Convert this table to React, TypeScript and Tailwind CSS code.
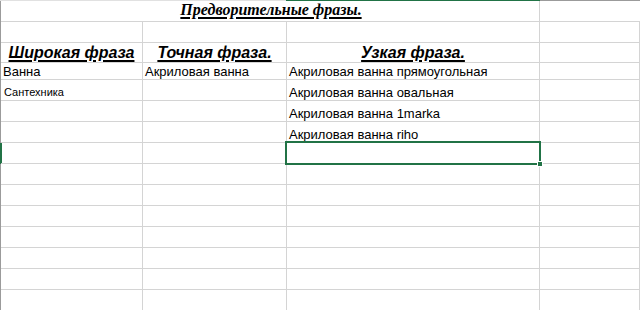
import React from "react";

type Cell = {
  text?: string;
  kind?: "head" | "data" | "small";
};

const sans = { fontFamily: '"Liberation Sans", Arial, sans-serif' };
const serif = { fontFamily: '"Liberation Serif", "Times New Roman", serif' };

const rowHeights = [21, 21, 20, 17, 21, 21, 21, 21, 21, 21, 21, 21, 21, 21, 21];

const body: Cell[][] = [
  [{}, {}, {}, {}],
  [
    { text: "Широкая фраза", kind: "head" },
    { text: "Точная фраза.", kind: "head" },
    { text: "Узкая фраза.", kind: "head" },
    {},
  ],
  [
    { text: "Ванна", kind: "data" },
    { text: "Акриловая ванна", kind: "data" },
    { text: "Акриловая ванна прямоугольная", kind: "data" },
    {},
  ],
  [
    { text: "Сантехника", kind: "small" },
    {},
    { text: "Акриловая ванна овальная", kind: "data" },
    {},
  ],
  [{}, {}, { text: "Акриловая ванна 1marka", kind: "data" }, {}],
  [{}, {}, { text: "Акриловая ванна riho", kind: "data" }, {}],
];

const colWidths = ["w-[142px]", "w-[144px]", "w-[253px]", "flex-1"];

function CellView({ cell, col, selected }: { cell: Cell; col: number; selected: boolean }) {
  const base = `${colWidths[col]} relative h-full border-r border-b border-[#d4d4d4] flex items-end overflow-visible whitespace-nowrap`;
  let content: React.ReactNode = null;
  if (cell.kind === "head") {
    content = (
      <div
        className="w-full text-center text-[16px] leading-none font-bold italic underline decoration-2 underline-offset-[2px] text-black pb-px"
        style={sans}
      >
        {cell.text}
      </div>
    );
  } else if (cell.kind === "data") {
    content = (
      <div className="pl-[2px] text-[13px] leading-none text-black pb-px" style={sans}>
        {cell.text}
      </div>
    );
  } else if (cell.kind === "small") {
    content = (
      <div className="pl-[3px] text-[11px] leading-none text-black pb-[2px]" style={sans}>
        {cell.text}
      </div>
    );
  }
  return (
    <div className={base}>
      {content}
      {selected && (
        <div className="absolute -left-[2px] -top-[2px] -right-[2px] -bottom-[2px] border-2 border-[#217346] z-10">
          <div className="absolute -right-[4px] -bottom-[4px] w-[6px] h-[6px] bg-[#217346] border border-white" />
        </div>
      )}
    </div>
  );
}

export default function App() {
  const extraRows = rowHeights.length - 1 - body.length;
  const rows: Cell[][] = [...body, ...Array.from({ length: extraRows }, () => [{}, {}, {}, {}])];
  const selectedRow = 6;

  return (
    <div className="w-[640px] h-[310px] overflow-hidden bg-white flex flex-col">
      {/* column header bottom edge, active column highlighted */}
      <div className="flex h-px shrink-0">
        <div className="w-[286px] bg-[#e1e1e1]" />
        <div className="w-[254px] bg-[#217346]" />
        <div className="flex-1 bg-[#9b9b9b]" />
      </div>
      <div className="flex flex-1">
        {/* row header right edge, active row highlighted */}
        <div className="w-px shrink-0 flex flex-col">
          {rowHeights.map((h, i) => (
            <div
              key={i}
              className={i === selectedRow + 1 ? "bg-[#217346] w-[2px]" : "bg-[#9b9b9b] w-px"}
              style={{ height: h }}
            />
          ))}
        </div>
        <div className="flex-1 flex flex-col">
          {/* merged title across the first three columns */}
          <div className="flex shrink-0 h-[21px]">
            <div className="w-[539px] h-full border-r border-b border-[#d4d4d4] flex items-end justify-center">
              <div
                className="text-[16px] leading-none font-bold italic underline decoration-2 underline-offset-[2px] text-black pb-[3px] pl-[2px]"
                style={serif}
              >
                Предворительные фразы.
              </div>
            </div>
            <div className="flex-1 h-full border-b border-[#d4d4d4]" />
          </div>
          {rows.map((r, ri) => (
            <div key={ri} className="flex shrink-0" style={{ height: rowHeights[ri + 1] }}>
              {r.map((c, ci) => (
                <CellView key={ci} cell={c} col={ci} selected={ri === selectedRow && ci === 2} />
              ))}
            </div>
          ))}
        </div>
      </div>
    </div>
  );
}
